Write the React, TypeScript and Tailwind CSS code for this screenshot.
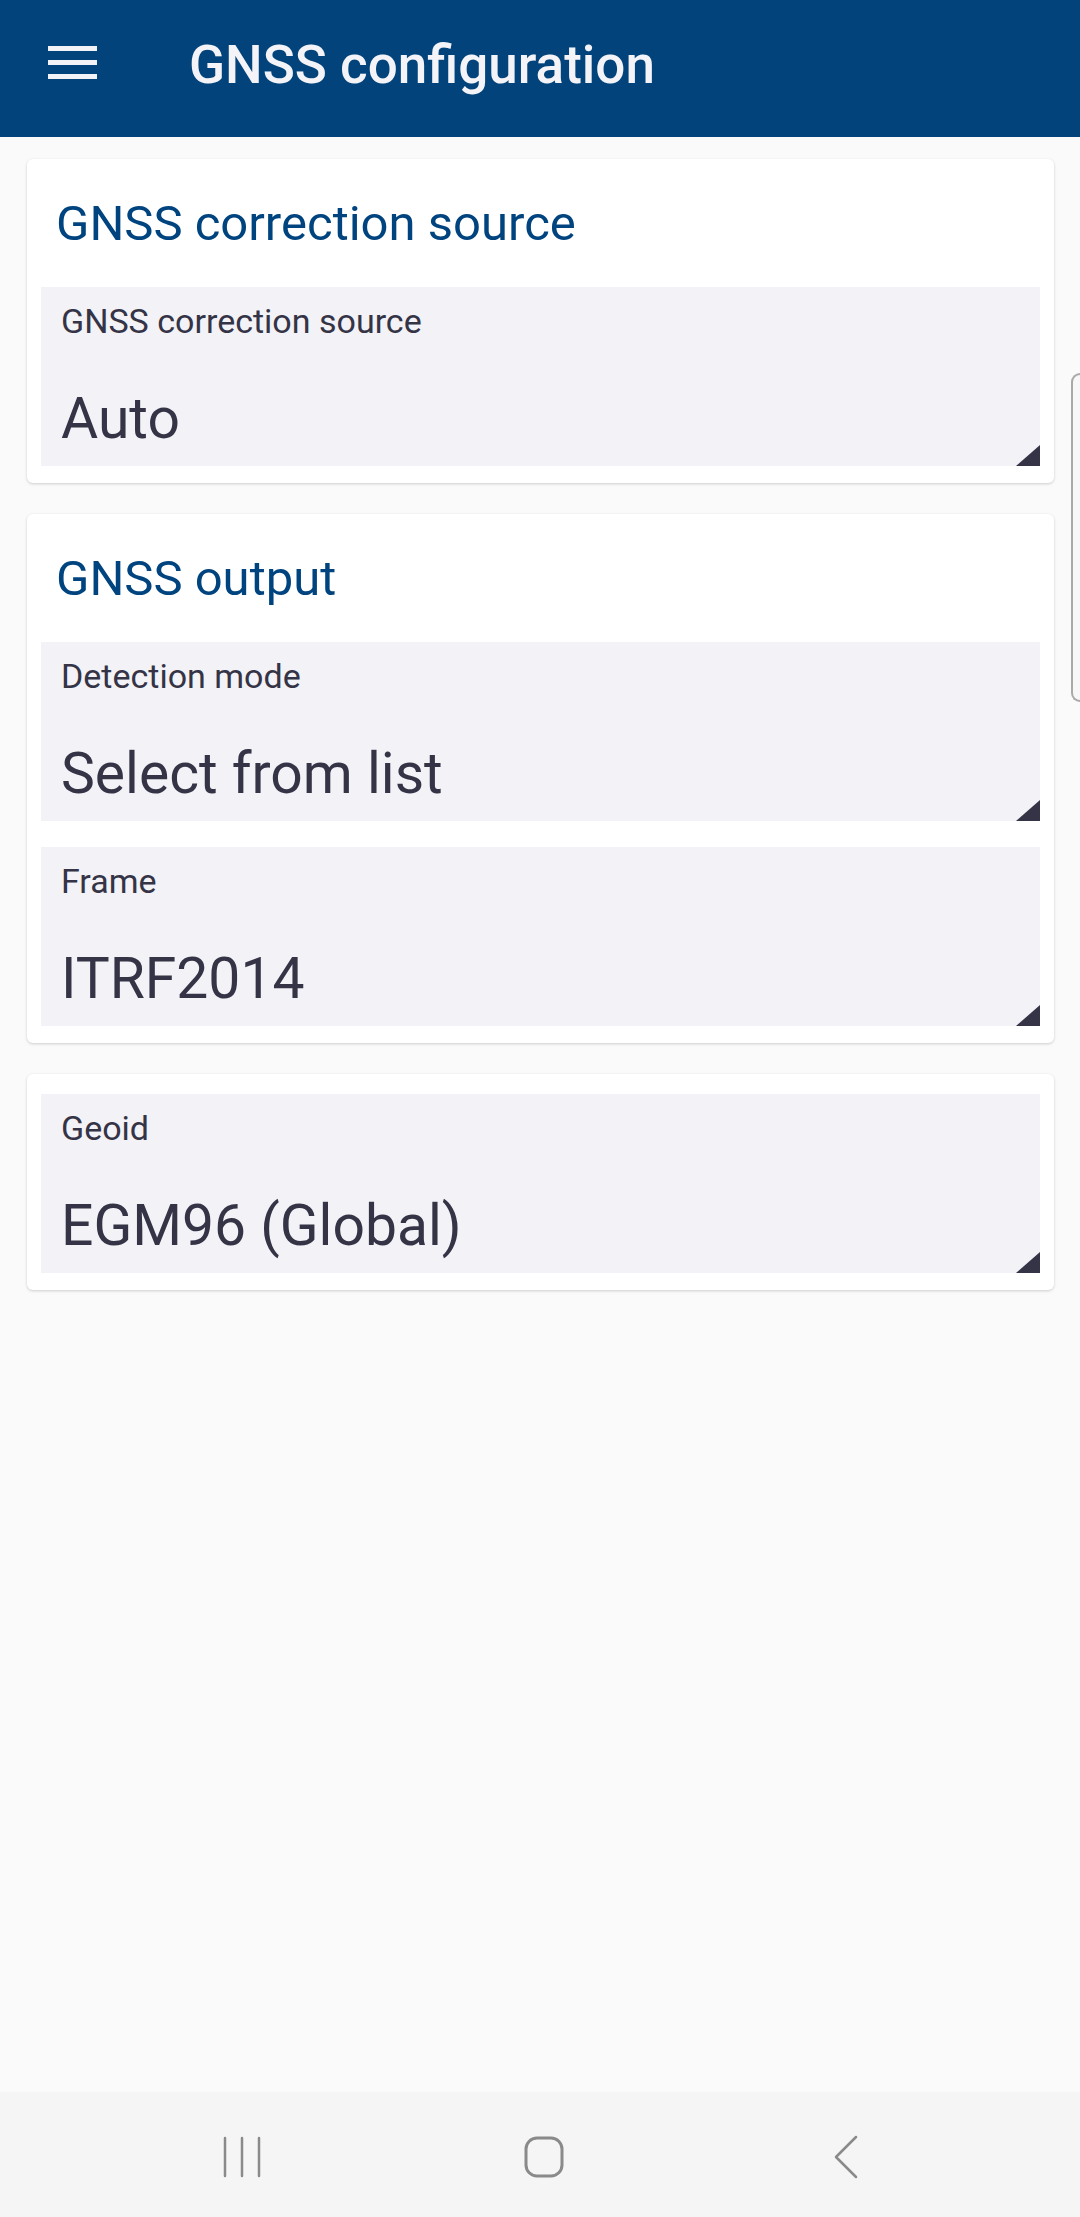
import React from "react";

type Field = {
  label: string;
  value: string;
};

type Section = {
  title?: string;
  fields: Field[];
};

const sections: Section[] = [
  {
    title: "GNSS correction source",
    fields: [{ label: "GNSS correction source", value: "Auto" }],
  },
  {
    title: "GNSS output",
    fields: [
      { label: "Detection mode", value: "Select from list" },
      { label: "Frame", value: "ITRF2014" },
    ],
  },
  {
    fields: [{ label: "Geoid", value: "EGM96 (Global)" }],
  },
];

const font = { fontFamily: "Roboto, 'Noto Sans', sans-serif" };

const SelectField = ({ label, value }: Field) => (
  <div className="relative h-[179px] bg-[#f2f2f7] pl-[20px] pt-[17px]">
    <div className="text-[34px] leading-none text-[#343446]">{label}</div>
    <div className="mt-[52px] text-[57px] leading-none text-[#343446]">{value}</div>
    <svg
      className="absolute right-0 bottom-0"
      width="24"
      height="21"
      viewBox="0 0 24 21"
    >
      <polygon points="0,21 24,0 24,21" fill="#343446" />
    </svg>
  </div>
);

const Card = ({ title, fields }: Section) => (
  <div
    className={`bg-white rounded-[6px] px-[14px] pb-[17px] shadow-[0_1px_3px_rgba(0,0,0,0.18)] ${
      title ? "" : "pt-[20px]"
    }`}
  >
    {title && (
      <div className="h-[128px] flex items-center pl-[15px]">
        <h2 className="text-[49px] leading-none font-normal text-[#00447f]">{title}</h2>
      </div>
    )}
    <div className="flex flex-col gap-[26px]">
      {fields.map((f) => (
        <SelectField key={f.label} {...f} />
      ))}
    </div>
  </div>
);

const App = () => (
  <div className="relative min-h-[2217px] flex flex-col bg-[#fafafa]" style={font}>
    <header className="h-[137px] bg-[#01437a] flex items-start shrink-0">
      <div className="ml-[48px] mt-[46px] flex flex-col gap-[9px]">
        <div className="h-[5px] w-[49px] bg-[#f2f2f7]" />
        <div className="h-[5px] w-[49px] bg-[#f2f2f7]" />
        <div className="h-[5px] w-[49px] bg-[#f2f2f7]" />
      </div>
      <h1 className="ml-[92px] mt-[39px] text-[53px] leading-none font-medium text-[#f3f3f8]">
        GNSS configuration
      </h1>
    </header>

    <main className="flex-1 pl-[27px] pr-[26px] pt-[22px] flex flex-col gap-[31px]">
      {sections.map((s, i) => (
        <Card key={i} {...s} />
      ))}
    </main>

    <nav className="h-[125px] bg-[#f5f5f5] flex items-center pl-[91px] shrink-0">
      <div className="w-[302px] flex justify-center pt-[5px]">
        <svg width="40" height="42" viewBox="0 0 40 42" fill="none" stroke="#8a8a8a" strokeWidth="2.5" strokeLinecap="round">
          <line x1="3" y1="2" x2="3" y2="40" />
          <line x1="20" y1="2" x2="20" y2="40" />
          <line x1="37" y1="2" x2="37" y2="40" />
        </svg>
      </div>
      <div className="w-[302px] flex justify-center pt-[5px]">
        <svg width="40" height="42" viewBox="0 0 40 42" fill="none" stroke="#8a8a8a" strokeWidth="3">
          <rect x="2" y="2" width="36" height="38" rx="11" />
        </svg>
      </div>
      <div className="w-[302px] flex justify-center pt-[5px]">
        <svg width="26" height="44" viewBox="0 0 26 44" fill="none" stroke="#8a8a8a" strokeWidth="2.5" strokeLinecap="round" strokeLinejoin="round">
          <polyline points="23,2 3,22 23,42" />
        </svg>
      </div>
    </nav>

    {/* edge panel handle */}
    <div className="absolute top-[373px] right-0 w-[9px] h-[329px] rounded-l-[10px] border-l-2 border-y-2 border-[#a9a9a9] bg-[#f7f7f7]" />
  </div>
);

export default App;
